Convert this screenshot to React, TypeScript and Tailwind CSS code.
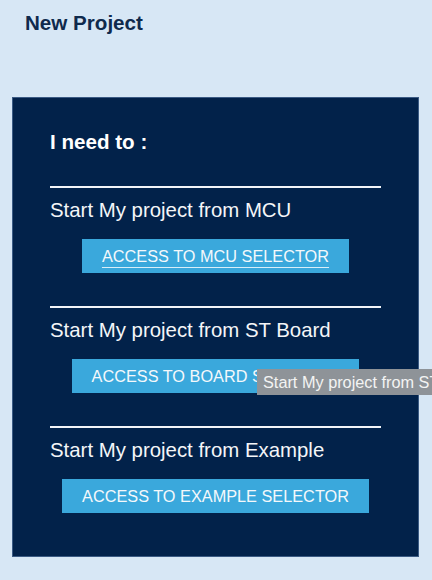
const SECTIONS = [
  { label: "Start My project from MCU", button: "ACCESS TO MCU SELECTOR", focused: true },
  { label: "Start My project from ST Board", button: "ACCESS TO BOARD SELECTOR", focused: false },
  { label: "Start My project from Example", button: "ACCESS TO EXAMPLE SELECTOR", focused: false },
];

export default function App() {
  return (
    <div className="relative w-[432px] h-[580px] overflow-hidden bg-[#d7e7f5] font-['Liberation_Sans',Arial,sans-serif]">
      <h1 className="pl-[25px] pt-[11px] text-[20.6px] leading-[24px] font-bold text-[#0f2a4d]">
        New Project
      </h1>

      <div className="ml-[12px] mt-[62px] w-[407px] h-[460px] border border-[#3b5b84] bg-[#02224a] pl-[37px] pt-[32px]">
        <div className="text-[20.6px] leading-[24px] font-bold text-white">I need to :</div>

        <div className="w-[331px] mt-[32px] flex flex-col">
          {SECTIONS.map((s, i) => (
            <div key={s.label} className={`flex flex-col ${i > 0 ? "mt-[33px]" : ""}`}>
              <div className="h-[2px] bg-[#f2f4f7]" />
              <div className="mt-[10px] text-[20.4px] leading-[24px] text-[#f4f6f8]">{s.label}</div>
              <div className="mt-[17px] flex justify-center">
                <button className="h-[34px] px-[20px] bg-[#3aa8dc] text-[16.3px] leading-[34px] text-[#f4f8fb] whitespace-nowrap">
                  <span
                    className={
                      s.focused
                        ? "underline decoration-1 underline-offset-[5px] decoration-[#d8eef9]"
                        : ""
                    }
                  >
                    {s.button}
                  </span>
                </button>
              </div>
            </div>
          ))}
        </div>
      </div>

      {/* tooltip over the board button */}
      <div className="absolute left-[257px] top-[369px] h-[26px] px-[6px] bg-[#8e9398] text-[16.3px] leading-[26px] text-[#f3f3f3] whitespace-nowrap">
        Start My project from ST Board
      </div>
    </div>
  );
}
